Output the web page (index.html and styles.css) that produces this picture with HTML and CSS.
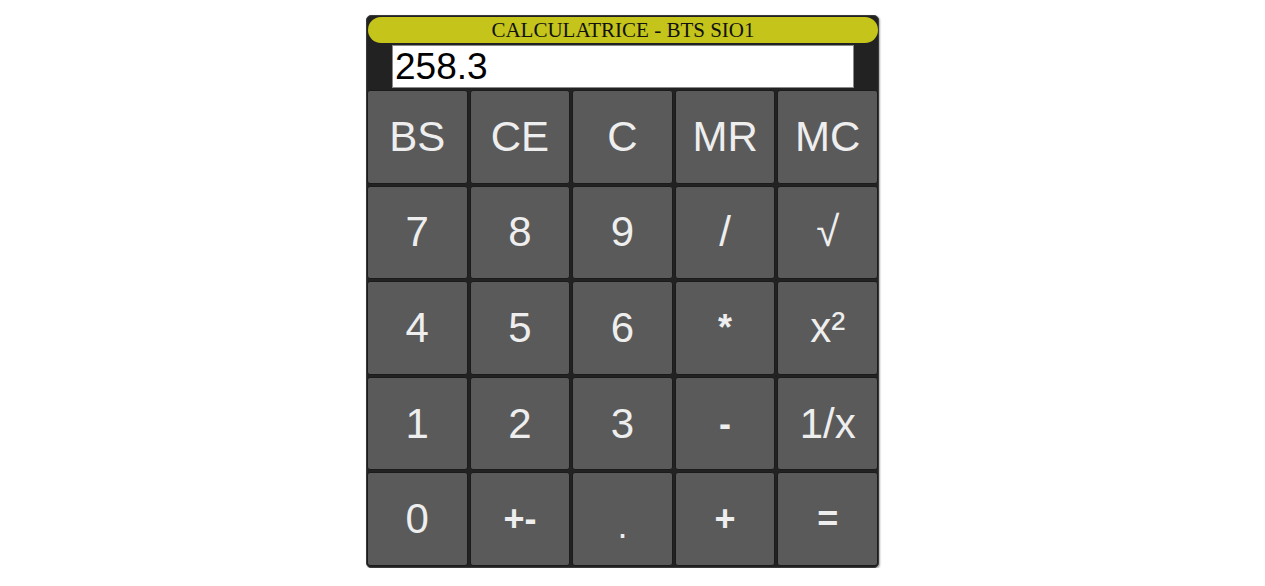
FILE: index.html
```html
<!DOCTYPE html>
<html lang="fr">
<head>
<meta charset="utf-8">
<title>Calculatrice</title>
<link rel="stylesheet" href="styles.css">
</head>
<body>
<div class="page">
  <div class="calc">
    <div class="title">CALCULATRICE - BTS SIO1</div>
    <div class="display-row">
      <input class="display" type="text" value="258.3">
    </div>
    <div class="keys">
      <button class="key">BS</button>
      <button class="key">CE</button>
      <button class="key">C</button>
      <button class="key">MR</button>
      <button class="key">MC</button>
      <button class="key">7</button>
      <button class="key">8</button>
      <button class="key">9</button>
      <button class="key">/</button>
      <button class="key">√</button>
      <button class="key">4</button>
      <button class="key">5</button>
      <button class="key">6</button>
      <button class="key key-bold">*</button>
      <button class="key">x²</button>
      <button class="key">1</button>
      <button class="key">2</button>
      <button class="key">3</button>
      <button class="key key-bold">-</button>
      <button class="key">1/x</button>
      <button class="key">0</button>
      <button class="key key-bold">+-</button>
      <button class="key key-dot">.</button>
      <button class="key key-bold">+</button>
      <button class="key key-bold">=</button>
    </div>
  </div>
</div>
</body>
</html>
```
FILE: styles.css
```css
html, body {
  margin: 0;
  padding: 0;
  background: #ffffff;
}

.page {
  width: 1245px;
  padding-top: 15px;
}

.calc {
  width: 511px;
  height: 551px;
  margin: 0 auto;
  background: #222222;
  border: 1px solid #3a3a3a;
  border-radius: 5px;
  box-shadow: 1px 1px 2px rgba(0, 0, 0, 0.35);
  display: flex;
  flex-direction: column;
}

.title {
  height: 26px;
  margin: 1px 0 0 1px;
  background: #c4c41a;
  border-radius: 13px;
  font-family: "Liberation Serif", "Times New Roman", serif;
  font-size: 21px;
  line-height: 27px;
  color: #111111;
  text-align: center;
}

.display-row {
  display: flex;
  justify-content: center;
  padding: 2px 0 1px 0;
}

.display {
  box-sizing: border-box;
  width: 462px;
  height: 43px;
  margin: 0 0 0 1px;
  padding: 0 2px;
  border: 1px solid #8a8a8a;
  background: #ffffff;
  font-family: "Liberation Sans", Arial, sans-serif;
  font-size: 37px;
  color: #000000;
  outline: none;
}

.keys {
  flex: 1;
  display: grid;
  grid-template-columns: repeat(5, 1fr);
  grid-template-rows: repeat(5, 1fr);
  gap: 2px;
  padding: 1px 0 1px 0;
}

.key {
  margin: 0;
  padding: 0;
  background: #5a5a5a;
  border: 1px solid #1b1b1b;
  border-radius: 3px;
  color: #eeeeee;
  font-family: "Liberation Sans", Arial, sans-serif;
  font-size: 42px;
  cursor: pointer;
}

.key-bold {
  font-weight: bold;
  font-size: 36px;
}

.key-dot {
  font-size: 36px;
  padding-top: 14px;
}
```
